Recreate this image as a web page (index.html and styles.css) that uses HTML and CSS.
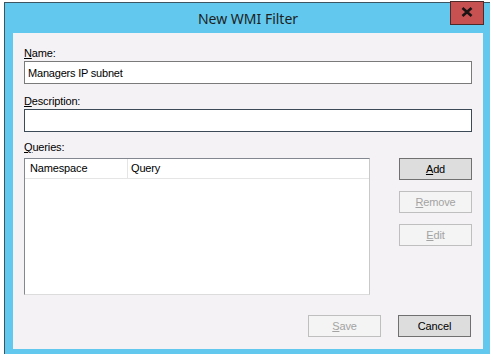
FILE: index.html
```html
<!DOCTYPE html>
<html lang="en">
<head>
  <meta charset="UTF-8">
  <title>New WMI Filter</title>
  <link rel="stylesheet" href="styles.css">
</head>
<body>
  <div class="window">
    <div class="titlebar">
      <span class="title">New WMI Filter</span>
      <button class="close" type="button" aria-label="Close">
        <svg width="12" height="10" viewBox="0 0 12 10">
          <path d="M1.5 1 L10.5 9 M10.5 1 L1.5 9" stroke="#1a1414" stroke-width="2.6" fill="none"/>
        </svg>
      </button>
    </div>

    <div class="client">
      <label class="field-label" for="name"><u>N</u>ame:</label>
      <input class="text-input" id="name" type="text" value="Managers IP subnet">

      <label class="field-label gap-top" for="desc"><u>D</u>escription:</label>
      <input class="text-input focused" id="desc" type="text">

      <div class="field-label queries-label"><u>Q</u>ueries:</div>
      <div class="queries">
        <div class="listbox">
          <div class="list-header">
            <div class="col col-ns">Namespace</div>
            <div class="col col-query">Query</div>
          </div>
        </div>
        <div class="side-buttons">
          <button class="btn default" type="button"><u>A</u>dd</button>
          <button class="btn" type="button" disabled><u>R</u>emove</button>
          <button class="btn" type="button" disabled><u>E</u>dit</button>
        </div>
      </div>

      <div class="footer">
        <button class="btn" type="button" disabled><u>S</u>ave</button>
        <button class="btn default" type="button">Cancel</button>
      </div>
    </div>
  </div>
</body>
</html>
```

FILE: styles.css
```css
body {
  margin: 0;
  background: #ffffff;
  font-family: 'Liberation Sans', Arial, sans-serif;
  overflow: hidden;
}

.window {
  margin: 2px 0 0 4px;
  width: 486px;
  height: 352px;
  box-sizing: border-box;
  background: #62c8ed;
  border-left: 1px solid #3d5560;
  border-top: 1px solid #3d5560;
  padding: 0 7px 0 8px;
}

.titlebar {
  position: relative;
  height: 30px;
  display: flex;
  align-items: center;
  justify-content: center;
}
.title {
  font-family: 'Noto Sans', sans-serif;
  font-size: 14px;
  color: #1e1e1e;
  padding-top: 1px;
}
.close {
  position: absolute;
  top: -2px;
  right: -1px;
  width: 34px;
  height: 24px;
  background: #c75050;
  border: 1px solid #4e2a2a;
  padding: 0 0 2px 0;
  display: flex;
  align-items: center;
  justify-content: center;
}

.client {
  background: #f5f2f5;
  height: 316px;
  box-sizing: border-box;
  padding: 14px 11px 0 11px;
  display: flex;
  flex-direction: column;
  font-size: 11px;
  letter-spacing: -0.15px;
  color: #000;
}

.field-label {
  display: block;
  line-height: 13px;
  margin-bottom: 1px;
}
.gap-top {
  margin-top: 11px;
}
.queries-label {
  margin-top: 9px;
  margin-bottom: 4px;
}

.text-input {
  height: 23px;
  box-sizing: border-box;
  border: 1px solid #7a7a7a;
  background: #fff;
  font-family: inherit;
  font-size: 11px;
  letter-spacing: -0.2px;
  padding: 0 3px;
  margin: 0;
  outline: none;
}
.text-input.focused {
  border-color: #3c4a58;
}

.queries {
  display: flex;
  gap: 29px;
}
.listbox {
  width: 346px;
  height: 137px;
  box-sizing: border-box;
  background: #fff;
  border: 1px solid #828790;
  border-right-color: #c9c9c9;
  border-bottom-color: #dcdcdc;
}
.list-header {
  display: flex;
  height: 19px;
  border-bottom: 1px solid #e5e5e5;
  line-height: 19px;
}
.col {
  padding-left: 5px;
}
.col-ns {
  width: 97px;
  border-right: 1px solid #e5e5e5;
}
.col-query {
  padding-left: 3px;
}

.side-buttons {
  display: flex;
  flex-direction: column;
  gap: 11px;
}

.btn {
  width: 73px;
  height: 22px;
  box-sizing: border-box;
  background: #f4f4f4;
  border: 1px solid #bfbfbf;
  font-family: inherit;
  font-size: 11px;
  letter-spacing: -0.15px;
  color: #000;
  padding: 0;
  margin: 0;
}
.btn:disabled {
  color: #a3a3a3;
}
.btn.default {
  background: #dddddd;
  border-color: #707070;
}

.footer {
  display: flex;
  justify-content: flex-end;
  gap: 17px;
  margin-top: 20px;
  padding-right: 1px;
}
```
